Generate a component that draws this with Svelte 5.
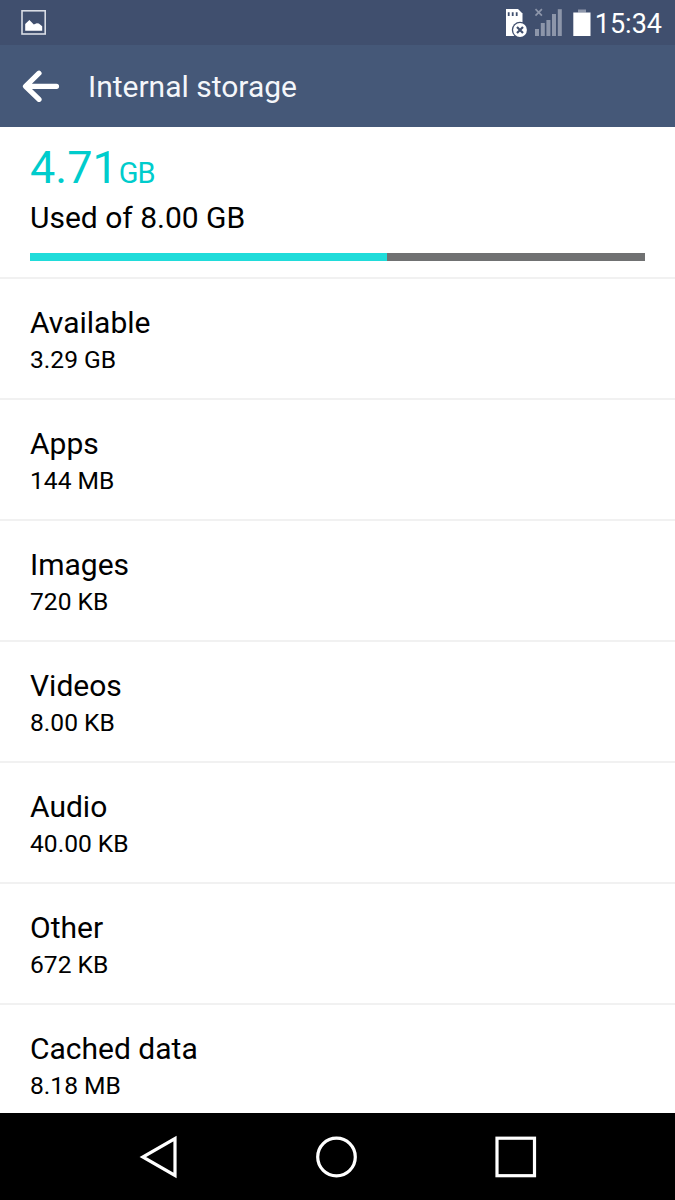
<script>
  const used = 4.71;
  const total = 8.0;
  const usedPercent = 58.1;

  const categories = [
    { name: 'Available', size: '3.29 GB' },
    { name: 'Apps', size: '144 MB' },
    { name: 'Images', size: '720 KB' },
    { name: 'Videos', size: '8.00 KB' },
    { name: 'Audio', size: '40.00 KB' },
    { name: 'Other', size: '672 KB' },
    { name: 'Cached data', size: '8.18 MB' },
  ];
</script>

<div class="screen">
  <div class="status-bar">
    <svg class="picture" width="25" height="25" viewBox="0 0 25 25">
      <rect x="1" y="0.8" width="23.2" height="23.2" fill="none" stroke="#d9dde5" stroke-width="1.6" />
      <path d="M4.2 20.8V14l4.2-4 4.4 4.4 3-1.2 2 .3 3.4 2.7v4.6z" fill="#fff" />
    </svg>

    <div class="indicators">
      <svg width="58" height="30" viewBox="0 0 58 30">
        <path d="M1 1h12l4.5 4.5V28H1z" fill="#fff" />
        <path d="M3.7 4.2v3.8M7.7 4.2v3.8M11.7 4.2v3.8" stroke="#404f6e" stroke-width="1.8" />
        <circle cx="15" cy="22" r="8.2" fill="#404f6e" />
        <circle cx="15" cy="22" r="6.9" fill="#fff" />
        <path d="M12 19l6 6M18 19l-6 6" stroke="#404f6e" stroke-width="2.2" />
        <g fill="#8d96aa">
          <rect x="30" y="21" width="4" height="7" />
          <rect x="35.8" y="15" width="4" height="13" />
          <rect x="41.4" y="12" width="4" height="16" />
          <rect x="47" y="6" width="4" height="22" />
          <rect x="52.8" y="1.2" width="4" height="26.8" />
        </g>
        <path d="M30.5 1.2l6.4 6.4M36.9 1.2l-6.4 6.4" stroke="#8d96aa" stroke-width="1.7" />
      </svg>
      <svg class="battery" width="18" height="30" viewBox="0 0 18 30">
        <rect x="5" y="1.5" width="8" height="3" fill="#8d96aa" />
        <rect x="0.3" y="4.5" width="17.2" height="23.5" fill="#fff" />
      </svg>
      <span class="clock">15:34</span>
    </div>
  </div>

  <header>
    <svg width="38" height="32" viewBox="0 0 38 32">
      <path d="M17 3.2L3.5 16.3 17 29.4M4 16.3h30.5" fill="none" stroke="#fff" stroke-width="5.2" stroke-linecap="round" stroke-linejoin="round" />
    </svg>
    <h1>Internal storage</h1>
  </header>

  <main>
    <section class="summary">
      <div class="amount">{used}<span class="unit">GB</span></div>
      <div class="caption">Used of {total.toFixed(2)} GB</div>
      <div class="bar">
        <div class="bar-used" style="width: {usedPercent}%"></div>
      </div>
    </section>

    {#each categories as { name, size }}
      <div class="row">
        <div class="name">{name}</div>
        <div class="size">{size}</div>
      </div>
    {/each}
  </main>

  <nav>
    <svg width="675" height="87" viewBox="0 0 675 87" fill="none" stroke="#fff" stroke-width="3.2">
      <path d="M175 25.5v37L142.8 44z" />
      <circle cx="336.5" cy="44" r="18.8" />
      <rect x="497" y="25.2" width="37.5" height="37.5" />
    </svg>
  </nav>
</div>

<style>
  :global(body) {
    margin: 0;
    background: #fff;
  }

  .screen {
    display: flex;
    flex-direction: column;
    height: 1200px;
    overflow: hidden;
    font-family: Roboto, sans-serif;
    color: #000;
  }

  .status-bar {
    display: flex;
    flex: none;
    justify-content: space-between;
    height: 45px;
    box-sizing: border-box;
    padding: 0 13px 0 21px;
    background: #404f6e;
  }

  .picture {
    margin-top: 10px;
  }

  .indicators {
    display: flex;
    padding-top: 8px;
  }

  .battery {
    margin-left: 10px;
  }

  .clock {
    margin-left: 4px;
    font-size: 27px;
    line-height: 32px;
    color: #fff;
  }

  header {
    display: flex;
    flex: none;
    align-items: center;
    height: 82px;
    padding-left: 22px;
    background: #455878;
  }

  h1 {
    margin: 2px 0 0 28px;
    font-size: 30px;
    font-weight: 400;
    line-height: 36px;
    color: #f4f6fa;
  }

  main {
    flex: 1;
    min-height: 0;
    overflow: hidden;
  }

  .summary {
    height: 152px;
    box-sizing: border-box;
    padding: 14px 30px 0;
    border-bottom: 2px solid #f1f1f1;
  }

  .amount {
    font-size: 45px;
    line-height: 53px;
    color: #00cccc;
  }

  .unit {
    margin-left: 1px;
    font-size: 29px;
    line-height: 1;
    letter-spacing: -1px;
  }

  .caption {
    margin-top: 6px;
    font-size: 30px;
    line-height: 35px;
  }

  .bar {
    height: 8px;
    margin-top: 18px;
    background: #707172;
  }

  .bar-used {
    height: 100%;
    background: #20dcda;
  }

  .row {
    height: 121px;
    box-sizing: border-box;
    padding: 26px 30px 0;
    border-bottom: 2px solid #f1f1f1;
  }

  .name {
    font-size: 30px;
    line-height: 35px;
  }

  .size {
    margin-top: 1px;
    font-size: 24.6px;
    line-height: 37px;
  }

  nav {
    flex: none;
    height: 87px;
    background: #000;
  }

  svg {
    display: block;
    flex: none;
  }
</style>
